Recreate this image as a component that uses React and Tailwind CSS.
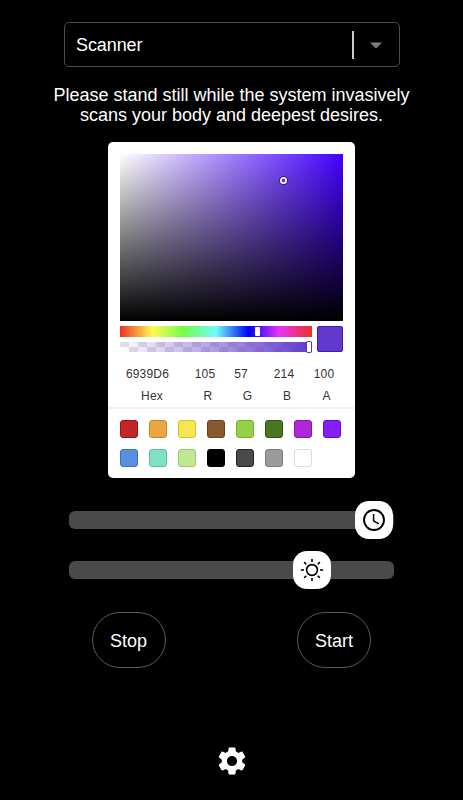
import React from 'react';
import { MdSettings } from 'react-icons/md';

const PRESETS = [
  'bg-[#c22626] border-[#9c1515]',
  'bg-[#eaa544] border-[#d08a1c]',
  'bg-[#f7e654] border-[#d9c81c]',
  'bg-[#87592f] border-[#6b3e15]',
  'bg-[#94d148] border-[#72b61c]',
  'bg-[#4b7522] border-[#245c08]',
  'bg-[#ae28d6] border-[#8f10b8]',
  'bg-[#8420f5] border-[#6208d8]',
  'bg-[#5b8fdf] border-[#3a70c4]',
  'bg-[#7de2c3] border-[#5cc0a2]',
  'bg-[#c0e792] border-[#9fca70]',
  'bg-[#000000] border-[#000000]',
  'bg-[#4a4a4a] border-[#242424]',
  'bg-[#9b9b9b] border-[#7c7c7c]',
  'bg-[#ffffff] border-[#dadada]',
];

const FIELDS = [
  { label: 'Hex', value: '6939D6', cell: 'w-[65px]', shift: 'pl-[9px]' },
  { label: 'R', value: '105', cell: 'w-[50px]', shift: 'pl-[6px]' },
  { label: 'G', value: '57', cell: 'w-[22px]', shift: 'pl-[13px]' },
  { label: 'B', value: '214', cell: 'w-[64px]', shift: 'pl-[6px]' },
  { label: 'A', value: '100', cell: 'w-[16px]', shift: 'pl-[5px]' },
];

function ClockIcon() {
  return (
    <svg width="26" height="26" viewBox="-13 -13 26 26" fill="none" stroke="#000" strokeWidth="1.9">
      <circle r="10" />
      <path d="M-0.4 -6V0.8L4.8 3.8" strokeWidth="1.5" />
    </svg>
  );
}

function SunIcon() {
  return (
    <svg width="26" height="26" viewBox="-13 -13 26 26" fill="none" stroke="#000" strokeWidth="1.6">
      <circle r="5.4" />
      {[0, 45, 90, 135, 180, 225, 270, 315].map((a) => (
        <path key={a} d="M0 -8.1V-11.1" transform={`rotate(${a})`} />
      ))}
    </svg>
  );
}

function Slider({ thumb, children }) {
  return (
    <div className="relative h-[18px] w-[325px] rounded-[6px] bg-[#4a4a4a]">
      <div className={`absolute -top-[10px] flex size-[38px] items-center justify-center rounded-[14px] bg-white text-black ${thumb}`}>
        {children}
      </div>
    </div>
  );
}

function ColorPicker() {
  return (
    <div className="mx-auto mt-[17px] h-[336px] w-[247px] shrink-0 rounded-[5px] bg-white pt-[12px] text-[#333]">
      <div className="relative mx-[12px] h-[167px] bg-[linear-gradient(to_top,#000,transparent),linear-gradient(to_right,#fff,#4400ff)]">
        <svg className="absolute left-[159px] top-[22px]" width="9" height="9" viewBox="-4.5 -4.5 9 9" fill="none">
          <circle r="4" stroke="#24117a" />
          <circle r="2.7" stroke="#fff" strokeWidth="1.6" />
        </svg>
      </div>
      <div className="mx-[12px] mt-[5px] flex gap-[5px]">
        <div className="w-[192px]">
          <div className="relative h-[11px] bg-[linear-gradient(to_right,#eb3223_0%,#fffb54_17%,#75fb4c_33%,#73fbfd_50%,#0000f5_67%,#ea33f7_83%,#eb3223_100%)]">
            <div className="absolute left-[135px] top-[1px] h-[9px] w-[5px] rounded-[1px] bg-white" />
          </div>
          <div className="relative mt-[5px] h-[10px] bg-[linear-gradient(to_right,transparent,#6139cc),repeating-conic-gradient(#fff_0_25%,#e2e2e2_0_50%)] bg-[length:100%_100%,18px_10px]">
            <div className="absolute left-[187px] top-0 h-[10px] w-[4px] rounded-[1px] bg-white shadow-[0_0_0_1px_#5a35bd]" />
          </div>
        </div>
        <div className="h-[26px] w-[26px] rounded-[2px] border border-[#4420a8] bg-[#6139cc]" />
      </div>
      <div className="ml-[7px] mt-[14px] flex text-center text-[12px] leading-[16px] tracking-[0.2px]">
        {FIELDS.map((f) => (
          <div key={f.label} className={`flex shrink-0 flex-col items-center ${f.cell}`}>
            <span className="whitespace-nowrap">{f.value}</span>
            <span className={`mt-[6px] ${f.shift}`}>{f.label}</span>
          </div>
        ))}
      </div>
      <div className="mt-[3px] h-[2px] bg-[#f1f1f1]" />
      <div className="ml-[12px] mt-[11px] grid w-[221px] grid-cols-8 gap-[11px]">
        {PRESETS.map((c) => (
          <div key={c} className={`size-[18px] rounded-[3px] border ${c}`} />
        ))}
      </div>
    </div>
  );
}

export default function App() {
  return (
    <main className="flex h-[800px] w-[463px] flex-col overflow-hidden bg-black font-['Liberation_Sans',Arial,sans-serif] text-[18px] text-white">
      <div className="ml-[64px] mt-[22px] flex h-[45px] w-[336px] shrink-0 items-center rounded-[5px] border border-[#4d4d4d] pl-[11px]">
        <span className="flex-1 pt-[2px] tracking-[-0.1px]">Scanner</span>
        <span className="h-[28px] w-[2px] bg-[#ccc]" />
        <svg className="ml-[16px] mr-[17px] mt-px" width="12" height="7" viewBox="0 0 12 7">
          <path d="M0 0.5H12L6 6.5Z" fill="#808080" />
        </svg>
      </div>
      <p className="mt-[18px] shrink-0 text-center text-[18px] leading-[20px]">
        Please stand still while the system invasively
        <br />
        scans your body and deepest desires.
      </p>
      <ColorPicker />
      <div className="ml-[69px] mt-[33px] flex flex-col gap-[32px]">
        <Slider thumb="left-[286px]">
          <ClockIcon />
        </Slider>
        <Slider thumb="left-[224px]">
          <SunIcon />
        </Slider>
      </div>
      <div className="ml-[92px] mt-[33px] flex w-[279px] justify-between">
        <button className="h-[56px] w-[74px] rounded-[28px] border border-[#5c5c5c] pr-[1px] pt-[2px]">Stop</button>
        <button className="h-[56px] w-[74px] rounded-[28px] border border-[#5c5c5c] pt-[2px]">Start</button>
      </div>
      <MdSettings className="mx-auto mt-[76px] shrink-0" size={34} />
    </main>
  );
}
